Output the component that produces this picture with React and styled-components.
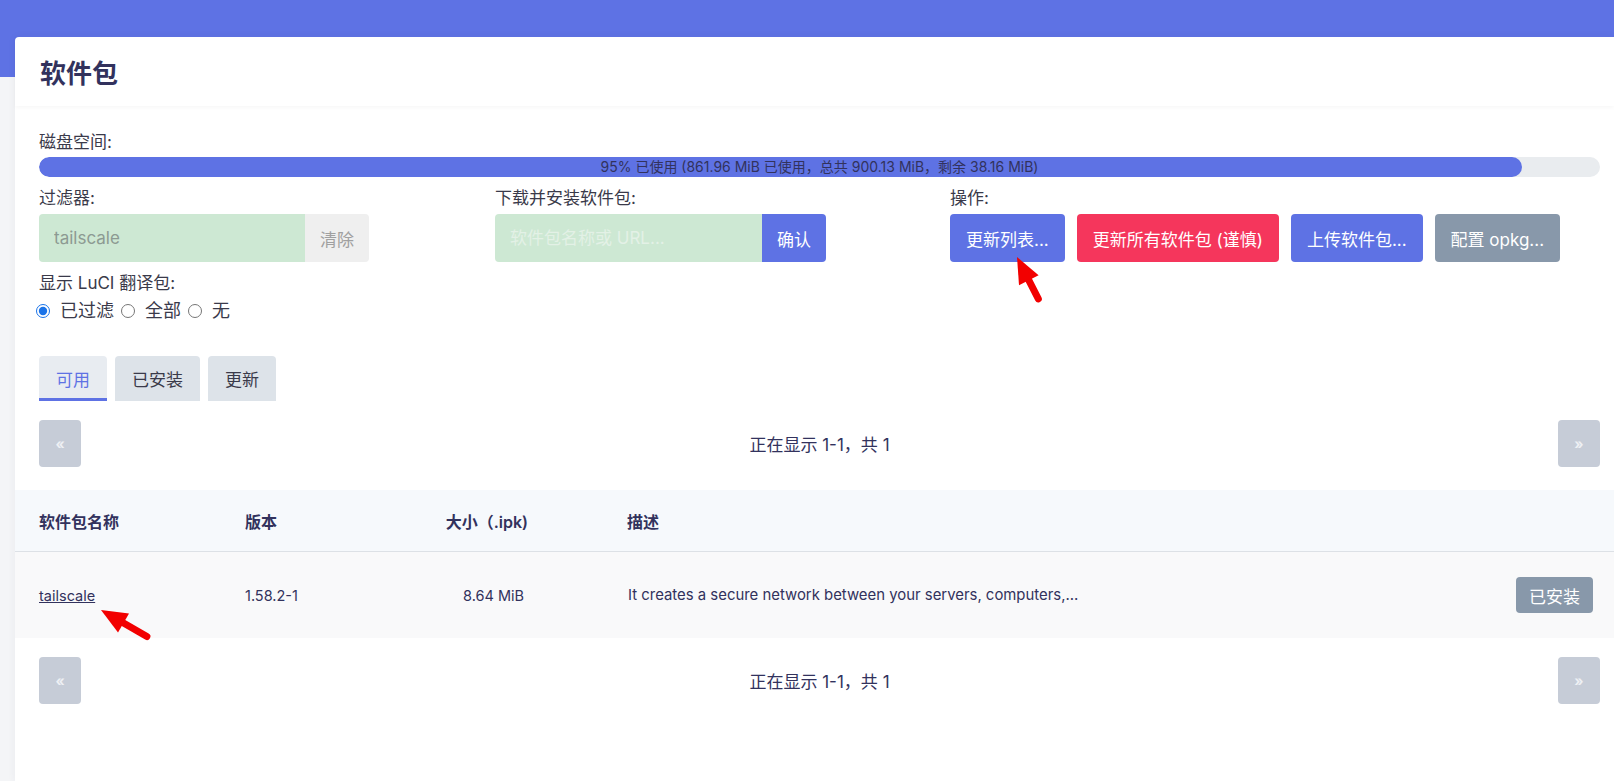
import React, { useState } from 'react'
import styled, { createGlobalStyle } from 'styled-components'

const GlobalStyle = createGlobalStyle`
  * { box-sizing: border-box; }
  body {
    margin: 0;
    background: #f4f5f7;
    font-family: Inter, "Noto Sans CJK SC", sans-serif;
    color: #32325d;
  }
`

const Page = styled.div`
  position: relative;
  min-height: 781px;
  padding: 37px 0 0 15px;
  background: linear-gradient(#5e72e4 0 77px, #f4f5f7 77px);
`

const Card = styled.div`
  background: #fff;
  border-radius: 4px 0 0 0;
  min-height: 744px;
  box-shadow: 0 0 8px rgba(50, 50, 93, 0.06);
`

const CardHeader = styled.div`
  height: 69px;
  display: flex;
  align-items: center;
  padding-left: 25px;
  font-size: 26px;
  font-weight: 700;
  color: #32325d;
  box-shadow: 0 2px 4px rgba(0, 0, 0, 0.03);
`

const Section = styled.div`
  padding: 0 14px 0 24px;
  margin-top: ${(p) => p.$top || 0}px;
`

const Label = styled.div`
  font-size: 17px;
  line-height: 24px;
  color: #3a3a4a;
  margin-top: ${(p) => p.$top || 0}px;
`

const Bar = styled.div`
  display: grid;
  height: 20px;
  margin-top: 3px;
  border-radius: 10px;
  background: #e9ecef;
  overflow: hidden;
`

const BarFill = styled.div`
  grid-area: 1 / 1;
  height: 100%;
  border-radius: 10px;
  background: #5e72e4;
`

const BarText = styled.div`
  grid-area: 1 / 1;
  text-align: center;
  font-size: 14px;
  line-height: 20px;
  color: #32325d;
`

const Columns = styled.div`
  display: grid;
  grid-template-columns: 456px 455px 1fr;
  margin-top: 9px;
`

const Field = styled.div`
  display: flex;
  flex-direction: column;
  gap: 4px;
`

const InputGroup = styled.div`
  display: flex;
  height: 48px;
`

const TextBox = styled.input`
  width: ${(p) => p.$w}px;
  height: 48px;
  border: none;
  border-radius: 4px 0 0 4px;
  background: #cde8d3;
  padding: 0 15px;
  font: inherit;
  font-size: 17px;
  color: #8c9a92;
  outline: none;
  &::placeholder { color: #e3f1e6; }
`

const AddonButton = styled.button`
  height: 48px;
  padding: 0 15px;
  border: none;
  border-radius: 0 4px 4px 0;
  background: ${(p) => (p.$primary ? '#5e72e4' : '#efefef')};
  color: ${(p) => (p.$primary ? '#fff' : '#a0a0a0')};
  font: inherit;
  font-size: 17px;
`

const Actions = styled.div`
  display: flex;
  gap: 12px;
`

const ActionButton = styled.button`
  height: 48px;
  padding: 0 16px;
  border: none;
  border-radius: 4px;
  background: ${(p) => p.$bg};
  color: #fff;
  font: inherit;
  font-size: 17px;
  white-space: nowrap;
`

const RadioRow = styled.div`
  display: flex;
  align-items: center;
  margin: 4px 0 0 -3px;
  font-size: 18px;
  line-height: 24px;
  color: #3a3a4a;

  input {
    margin: 0 10px 0 0;
    width: 14px;
    height: 14px;
    accent-color: #1a73e8;
  }
  label {
    display: flex;
    align-items: center;
    margin-right: 7px;
  }
`

const Tabs = styled.div`
  display: flex;
  gap: 8px;
`

const Tab = styled.div`
  height: 45px;
  padding: 3px 17px 0;
  display: flex;
  align-items: center;
  font-size: 17px;
  border-radius: 4px 4px 0 0;
  background: ${(p) => (p.$active ? '#e8ecf1' : '#dde3e9')};
  color: ${(p) => (p.$active ? '#5e72e4' : '#3a3a4a')};
  border-bottom: 3px solid ${(p) => (p.$active ? '#5e72e4' : 'transparent')};
`

const Pager = styled.div`
  display: flex;
  align-items: center;
  justify-content: space-between;
`

const PageButton = styled.button`
  width: 42px;
  height: 47px;
  border: none;
  border-radius: 4px;
  background: #c6ccd7;
  color: #eef0f4;
  font: inherit;
  font-size: 14px;
  font-weight: 700;
`

const PagerText = styled.div`
  font-size: 17px;
  color: #32325d;
`

const Table = styled.div`
  margin-top: 23px;
`

const Row = styled.div`
  display: grid;
  grid-template-columns: 206px 145px 138px 1fr auto;
  align-items: center;
  padding: 0 21px 0 24px;
  height: ${(p) => (p.$head ? 62 : 86)}px;
  background: ${(p) => (p.$head ? '#f6f9fc' : '#f9f9fa')};
  border-bottom: ${(p) => (p.$head ? '1px solid #dde1e6' : 'none')};
`

const HeadCell = styled.div`
  font-size: 16px;
  font-weight: 600;
  color: #32325d;
  text-align: ${(p) => (p.$right ? 'right' : 'left')};
  padding-left: ${(p) => p.$pl || 0}px;
`

const Cell = styled.div`
  font-size: 14.5px;
  color: #32325d;
  text-align: ${(p) => (p.$right ? 'right' : 'left')};
  padding-left: ${(p) => p.$pl || 0}px;
  padding-right: ${(p) => p.$pr || 0}px;
  white-space: nowrap;
`

const Description = styled(Cell)`
  font-size: 14.9px;
`

const PkgLink = styled.a`
  color: #32325d;
  text-decoration: underline;
  font-size: 14.5px;
`

const InstalledButton = styled.button`
  height: 36px;
  padding: 0 13px;
  border: none;
  border-radius: 4px;
  background: #8898aa;
  color: #fff;
  font: inherit;
  font-size: 17px;
`

const Arrow = styled.svg`
  position: absolute;
  left: ${(p) => p.$x - 12}px;
  top: ${(p) => p.$y}px;
  transform-origin: 12px 0;
  transform: rotate(${(p) => p.$deg}deg);
  overflow: visible;
`

const RedArrow = ({ x, y, deg, len }) => (
  <Arrow $x={x} $y={y} $deg={deg} width="24" height={len} viewBox={`0 0 24 ${len}`}>
    <polygon points="12,0 23,26 1,26" fill="#f20000" />
    <line x1="12" y1="20" x2="12" y2={len - 3} stroke="#f20000" strokeWidth="7" strokeLinecap="round" />
  </Arrow>
)

const disk = { used: 861.96, total: 900.13, free: 38.16 }

const Pagination = ({ top }) => (
  <Section $top={top}>
    <Pager>
      <PageButton>«</PageButton>
      <PagerText>正在显示 1-1，共 1</PagerText>
      <PageButton>»</PageButton>
    </Pager>
  </Section>
)

export default function App() {
  const [mode, setMode] = useState('filtered')
  const [tab, setTab] = useState('available')
  const pct = Math.floor((disk.used / disk.total) * 100)

  return (
    <Page>
      <GlobalStyle />
      <Card>
        <CardHeader>软件包</CardHeader>

        <Section $top={24}>
          <Label>磁盘空间:</Label>
          <Bar>
            <BarFill style={{ width: `${pct}%` }} />
            <BarText>
              {pct}% 已使用 ({disk.used} MiB 已使用，总共 {disk.total} MiB，剩余 {disk.free} MiB)
            </BarText>
          </Bar>

          <Columns>
            <Field>
              <Label>过滤器:</Label>
              <InputGroup>
                <TextBox $w={266} defaultValue="tailscale" />
                <AddonButton>清除</AddonButton>
              </InputGroup>
            </Field>
            <Field>
              <Label>下载并安装软件包:</Label>
              <InputGroup>
                <TextBox $w={267} placeholder="软件包名称或 URL..." />
                <AddonButton $primary>确认</AddonButton>
              </InputGroup>
            </Field>
            <Field>
              <Label>操作:</Label>
              <Actions>
                <ActionButton $bg="#5e72e4">更新列表...</ActionButton>
                <ActionButton $bg="#f5365c">更新所有软件包 (谨慎)</ActionButton>
                <ActionButton $bg="#5e72e4">上传软件包...</ActionButton>
                <ActionButton $bg="#8898aa">配置 opkg...</ActionButton>
              </Actions>
            </Field>
          </Columns>

          <Label $top={9}>显示 LuCI 翻译包:</Label>
          <RadioRow>
            {[
              ['filtered', '已过滤'],
              ['all', '全部'],
              ['none', '无'],
            ].map(([key, text]) => (
              <label key={key}>
                <input type="radio" name="i18n" checked={mode === key} onChange={() => setMode(key)} />
                {text}
              </label>
            ))}
          </RadioRow>
        </Section>

        <Section $top={33}>
          <Tabs>
            {[
              ['available', '可用'],
              ['installed', '已安装'],
              ['updates', '更新'],
            ].map(([key, text]) => (
              <Tab key={key} $active={tab === key} onClick={() => setTab(key)}>
                {text}
              </Tab>
            ))}
          </Tabs>
        </Section>

        <Pagination top={19} />

        <Table>
          <Row $head>
            <HeadCell>软件包名称</HeadCell>
            <HeadCell>版本</HeadCell>
            <HeadCell $right>大小（.ipk)</HeadCell>
            <HeadCell $pl={99}>描述</HeadCell>
            <span />
          </Row>
          <Row>
            <Cell>
              <PkgLink href="#">tailscale</PkgLink>
            </Cell>
            <Cell>1.58.2-1</Cell>
            <Cell $right $pr={4}>8.64 MiB</Cell>
            <Description $pl={100}>It creates a secure network between your servers, computers,...</Description>
            <InstalledButton>已安装</InstalledButton>
          </Row>
        </Table>

        <Pagination top={19} />
      </Card>

      <RedArrow x={1017} y={257} deg={-27} len={50} />
      <RedArrow x={101} y={610} deg={-60} len={56} />
    </Page>
  )
}
